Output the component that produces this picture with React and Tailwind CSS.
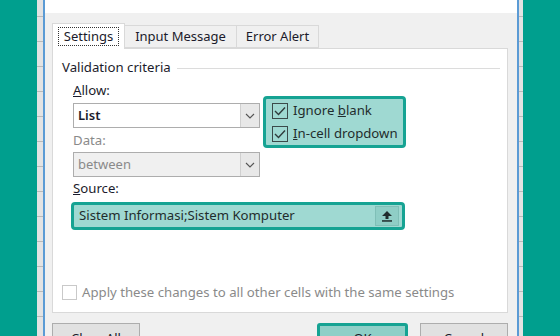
import React from "react";

const font = { fontFamily: '"Noto Sans", "Open Sans", sans-serif' };

function Strip({ w }) {
  // spreadsheet edge peeking out behind the dialog
  return (
    <div className={`${w} h-full bg-[#e3e3e3] flex flex-col`}>
      <div className="h-[17px] border-b border-[#b9b9b9] shrink-0" />
      {[0, 1, 2, 3, 4, 5, 6, 7, 8, 9, 10, 11, 12].map((i) => (
        <div key={i} className="h-[25px] border-b border-[#b9b9b9] shrink-0" />
      ))}
    </div>
  );
}

function Chevron() {
  return (
    <svg width="10" height="6" viewBox="0 0 10 6">
      <polyline points="1,1 5,5 9,1" fill="none" stroke="#555" strokeWidth="1.1" />
    </svg>
  );
}

function Check() {
  return (
    <div className="w-[16px] h-[16px] border border-[#3b4a4a] flex items-center justify-center shrink-0">
      <svg width="12" height="10" viewBox="0 0 12 10">
        <polyline points="1,5 4.5,8.5 11,1.5" fill="none" stroke="#2f3b3b" strokeWidth="1.4" />
      </svg>
    </div>
  );
}

function Select({ value, disabled }) {
  return (
    <div
      className={`h-[25px] border border-[#adadad] flex items-stretch ${
        disabled ? "bg-[#f0f0f0]" : "bg-white"
      }`}
    >
      <div
        className={`flex-1 flex items-center pl-[4px] text-[13px] ${
          disabled ? "text-[#8a8a8a]" : "text-[#1b1b2b] font-semibold"
        }`}
      >
        {value}
      </div>
      <div className="w-[19px] border-l border-[#d0d0d0] bg-[#e8e8e8] flex items-center justify-center">
        <Chevron />
      </div>
    </div>
  );
}

export default function App() {
  return (
    <div className="w-[560px] h-[336px] overflow-hidden flex bg-[#009f8e]" style={font}>
      <div className="w-[37px] h-full bg-[#009f8e]" />
      <Strip w="w-[6px]" />

      {/* dialog */}
      <div className="w-[476px] h-full border-x-2 border-[#5b9bd5] flex flex-col bg-[#f0f0f0]">
        {/* title bar, mostly cut off */}
        <div className="h-[13px] bg-white overflow-hidden relative shrink-0">
          <div className="absolute left-[9px] -top-[16px] text-[15px] leading-[20px] text-[#a0a0a0]">Data Validation</div>
          <div className="absolute left-[387px] -top-[16px] text-[15px] leading-[20px] text-[#a0a0a0]">?</div>
          <div className="absolute left-[438px] -top-[16px] text-[15px] leading-[20px] text-[#a0a0a0]">✕</div>
        </div>

        <div className="flex-1 pl-[7px] pr-[9px] pt-[10px] flex flex-col">
          {/* tabs */}
          <div className="flex items-end h-[25px] text-[13px] text-[#1b1b2b]">
            <div className="w-[73px] h-[26px] bg-white border border-b-0 border-[#d9d9d9] flex items-center justify-center -mb-[1px] relative z-10">
              <div className="border border-dotted border-[#333] px-[5px] h-[19px] flex items-center">Settings</div>
            </div>
            <div className="w-[112px] h-[23px] border border-l-0 border-[#d9d9d9] flex items-center justify-center">
              Input Message
            </div>
            <div className="w-[82px] h-[23px] border border-l-0 border-[#d9d9d9] flex items-center justify-center">
              Error Alert
            </div>
          </div>

          {/* tab panel */}
          <div className="h-[265px] bg-white border border-[#d9d9d9] flex flex-col text-[13.2px] text-[#1b1b2b]">
            <div className="flex items-center h-[16px] mt-[11px] pl-[9px] pr-[7px]">
              <span>Validation criteria</span>
              <div className="flex-1 ml-[6px] border-t border-[#dcdcdc]" />
            </div>

            <div className="flex pl-[20px] mt-[8px]">
              <div className="w-[187px] flex flex-col">
                <div className="h-[14px] flex items-center">
                  <span><span className="underline">A</span>llow:</span>
                </div>
                <div className="mt-[5px]">
                  <Select value="List" />
                </div>
                <div className="h-[14px] mt-[6px] flex items-center text-[#8a8a8a]">Data:</div>
                <div className="mt-[4px]">
                  <Select value="between" disabled />
                </div>
              </div>

              <div className="ml-[3px] mt-[12px] w-[143px] h-[52px] rounded-[4px] border-[3px] border-[#16a393] bg-[#9fd9d2] flex flex-col justify-center gap-[7px] pl-[6px] text-[#1f2d2d]">
                <div className="flex items-center gap-[5px] h-[16px]">
                  <Check />
                  <span>
                    Ignore <span className="underline">b</span>lank
                  </span>
                </div>
                <div className="flex items-center gap-[5px] h-[16px]">
                  <Check />
                  <span>
                    <span className="underline">I</span>n-cell dropdown
                  </span>
                </div>
              </div>
            </div>

            <div className="h-[14px] mt-[5px] pl-[20px] flex items-center">
              <span><span className="underline">S</span>ource:</span>
            </div>

            <div className="ml-[18px] mt-[6px] w-[334px] h-[28px] rounded-[4px] border-[3px] border-[#16a393] bg-[#9fd9d2] flex items-center pl-[3px] pr-[3px] text-[#1f2d2d]">
              <div className="flex-1 h-full flex items-center pl-[2px]">Sistem Informasi;Sistem Komputer</div>
              <div className="w-[24px] h-[20px] bg-[#8fcec6] border border-[#7fbfb7] flex items-center justify-center">
                <svg width="12" height="12" viewBox="0 0 12 12">
                  <polygon points="6,1 11,6 7.5,6 7.5,9 4.5,9 4.5,6 1,6" fill="#1f2d2d" />
                  <rect x="1" y="10.2" width="10" height="1.5" fill="#1f2d2d" />
                </svg>
              </div>
            </div>

            <div className="flex items-center mt-[53px] pl-[9px] gap-[5px] text-[#8a8a8a]">
              <div className="w-[15px] h-[15px] border border-[#c9c9c9] bg-white" />
              <span>Apply these changes to all other cells with the same settings</span>
            </div>
          </div>

          {/* buttons */}
          <div className="flex mt-[10px] text-[13px] text-[#1b1b2b]">
            <div className="w-[88px] h-[24px] border border-[#adadad] bg-[#e1e1e1] flex justify-center pt-[5px]">
              Clear All
            </div>
            <div className="flex-1" />
            <div className="w-[91px] h-[24px] rounded-[3px] border-[3px] border-[#16a393] bg-[#8fcfc7] flex justify-center pt-[3px]">
              OK
            </div>
            <div className="w-[88px] h-[24px] ml-[12px] border border-[#adadad] bg-[#e1e1e1] flex justify-center pt-[5px]">
              Cancel
            </div>
          </div>
        </div>
      </div>

      <Strip w="w-[4px]" />
      <div className="flex-1 h-full bg-[#009f8e]" />
    </div>
  );
}
